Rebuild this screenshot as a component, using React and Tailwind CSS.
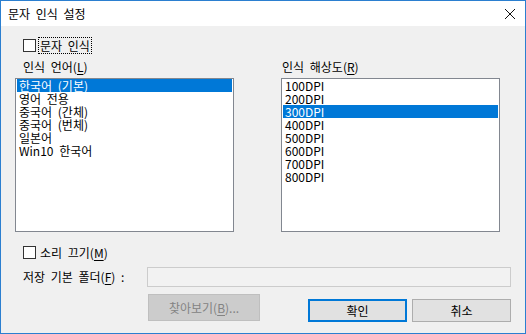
import React from "react";

const font = { fontFamily: '"Noto Sans CJK KR", "Noto Sans", sans-serif' };

function Box() {
  return <div className="w-[13px] h-[13px] border border-[#333333] bg-white shrink-0" />;
}

function ListBox({ items, selected }) {
  return (
    <div className="w-[219px] h-[154px] border border-[#828790] bg-white px-[1px] overflow-hidden">
      {items.map((t, i) => (
        <div
          key={i}
          className={
            "h-[13px] leading-[13px] pl-[2px] text-[12px] whitespace-nowrap " +
            (i === selected ? "bg-[#0078d7] text-white" : "text-black")
          }
        >
          {t}
        </div>
      ))}
    </div>
  );
}

export default function App() {
  return (
    <div
      className="w-[526px] h-[334px] border border-[#2b7fd0] flex flex-col text-black text-[12px] [word-spacing:3px]"
      style={font}
    >
      <div className="h-[25px] bg-white flex items-center justify-between pl-[7px] pr-[9px] shrink-0">
        <span className="text-[12px] leading-[16px]">문자 인식 설정</span>
        <svg width="12" height="12" viewBox="0 0 12 12" className="mt-[1px]">
          <path d="M1 1 L11 11 M11 1 L1 11" stroke="#111" strokeWidth="1" />
        </svg>
      </div>
      <div className="flex-1 bg-[#f0f0f0] flex flex-col">
        <div className="mt-[11px] h-[17px] flex items-center pl-[22px]">
          <Box />
          <div className="ml-[2px] h-[17px] px-[1px] border border-dotted border-black flex items-center leading-[15px]">
            문자 인식
          </div>
        </div>
        <div className="h-[24px] flex pl-[22px] pt-[5px] leading-[16px]">
          <span className="w-[259px]">
            인식 언어(<u className="underline-offset-2">L</u>)
          </span>
          <span>
            인식 해상도(<u className="underline-offset-2">R</u>)
          </span>
        </div>
        <div className="flex pl-[14px] gap-[47px]">
          <ListBox
            items={["한국어 (기본)", "영어 전용", "중국어 (간체)", "중국어 (번체)", "일본어", "Win10 한국어"]}
            selected={0}
          />
          <ListBox
            items={["100DPI", "200DPI", "300DPI", "400DPI", "500DPI", "600DPI", "700DPI", "800DPI"]}
            selected={2}
          />
        </div>
        <div className="mt-[12px] h-[17px] flex items-center pl-[22px]">
          <Box />
          <span className="ml-[4px] leading-[16px]">
            소리 끄기(<u className="underline-offset-2">M</u>)
          </span>
        </div>
        <div className="mt-[6px] h-[20px] flex items-center pl-[22px]">
          <span className="w-[124px] leading-[16px]">
            저장 기본 폴더(<u className="underline-offset-2">F</u>) :
          </span>
          <div className="w-[364px] h-[20px] border border-[#cccccc] bg-[#f2f2f2]" />
        </div>
        <div className="mt-[7px] flex items-start pl-[147px]">
          <div className="w-[112px] h-[27px] border border-[#bfbfbf] bg-[#cccccc] text-[#838383] flex items-center justify-center leading-[16px]">
            <span>
              찾아보기(<u className="underline-offset-2">B</u>)...
            </span>
          </div>
          <div className="ml-[48px] mt-[5px] w-[99px] h-[23px] border-2 border-[#0078d7] bg-[#e1e1e1] flex items-center justify-center leading-[16px]">
            확인
          </div>
          <div className="ml-[5px] mt-[5px] w-[99px] h-[23px] border border-[#adadad] bg-[#e1e1e1] flex items-center justify-center leading-[16px]">
            취소
          </div>
        </div>
      </div>
    </div>
  );
}
